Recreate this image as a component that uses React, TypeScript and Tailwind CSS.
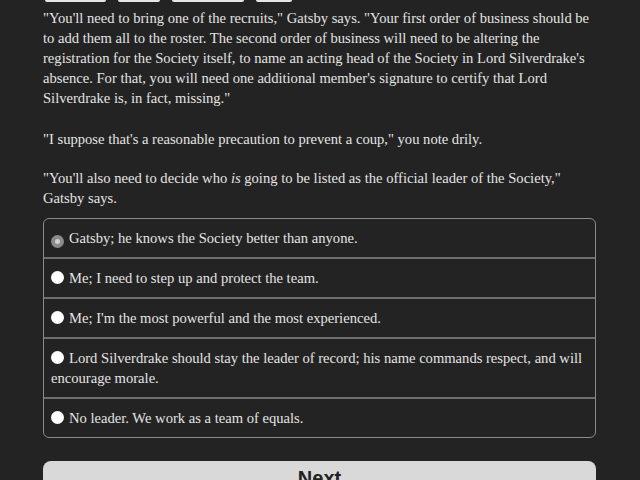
import React from "react";

const serif = { fontFamily: '"Liberation Serif", "DejaVu Serif", serif' };

const options = [
  { text: "Gatsby; he knows the Society better than anyone.", selected: true },
  { text: "Me; I need to step up and protect the team." },
  { text: "Me; I'm the most powerful and the most experienced." },
  {
    text: "Lord Silverdrake should stay the leader of record; his name commands respect, and will encourage morale.",
  },
  { text: "No leader. We work as a team of equals." },
];

function Radio({ selected }: { selected?: boolean }) {
  if (selected) {
    return (
      <span className="inline-flex w-[13px] h-[13px] rounded-full bg-[#8a8a8a] items-center justify-center align-[-1px] mr-[5px]">
        <span className="w-[5px] h-[5px] rounded-full bg-[#d0d0d0]" />
      </span>
    );
  }
  return (
    <span className="inline-block w-[13px] h-[13px] rounded-full bg-white align-[-1px] mr-[5px]" />
  );
}

export default function App() {
  return (
    <div className="min-h-screen h-[480px] overflow-hidden bg-[#232323] text-[#e4e4e4]">
      <div className="w-[553px] ml-[43px]">
        {/* toolbar buttons scrolled mostly out of view */}
        <div className="flex gap-[12px] h-[2px] ml-[2px]">
          <span className="w-[61px] h-[2px] bg-[#e6e6e6] rounded-b-sm" />
          <span className="w-[42px] h-[2px] bg-[#e6e6e6] rounded-b-sm" />
          <span className="w-[72px] h-[2px] bg-[#e6e6e6] rounded-b-sm" />
          <span className="w-[36px] h-[2px] bg-[#e6e6e6] rounded-b-sm" />
        </div>
        <div style={serif} className="text-[14.6px] leading-[20px]">
          <p className="mt-[6px]">
            "You'll need to bring one of the recruits," Gatsby says. "Your first order of business should be to add them all to the roster. The second order of business will need to be altering the registration for the Society itself, to name an acting head of the Society in Lord Silverdrake's absence. For that, you will need one additional member's signature to certify that Lord Silverdrake is, in fact, missing."
          </p>
          <p className="mt-[21px]">
            "I suppose that's a reasonable precaution to prevent a coup," you note drily.
          </p>
          <p className="mt-[19px]">
            "You'll also need to decide who <i>is</i> going to be listed as the official leader of the Society," Gatsby says.
          </p>
          <div className="mt-[10px] border border-[#8a8a8a] rounded-[6px] overflow-hidden">
            {options.map((o, i) => (
              <div
                key={i}
                className={
                  "pl-[7px] pr-[4px] py-[9px] " + (i > 0 ? "border-t-2 border-[#6e6e6e]" : "")
                }
              >
                <Radio selected={o.selected} />
                {o.text}
              </div>
            ))}
          </div>
        </div>
        <button
          className="mt-[23px] w-full h-[40px] rounded-[8px] bg-[#d9d9d9] text-[#222] font-bold text-[20px] pb-[12px] pt-[2px]"
          style={{ fontFamily: '"Liberation Sans", Arial, sans-serif' }}
        >
          Next
        </button>
      </div>
    </div>
  );
}
